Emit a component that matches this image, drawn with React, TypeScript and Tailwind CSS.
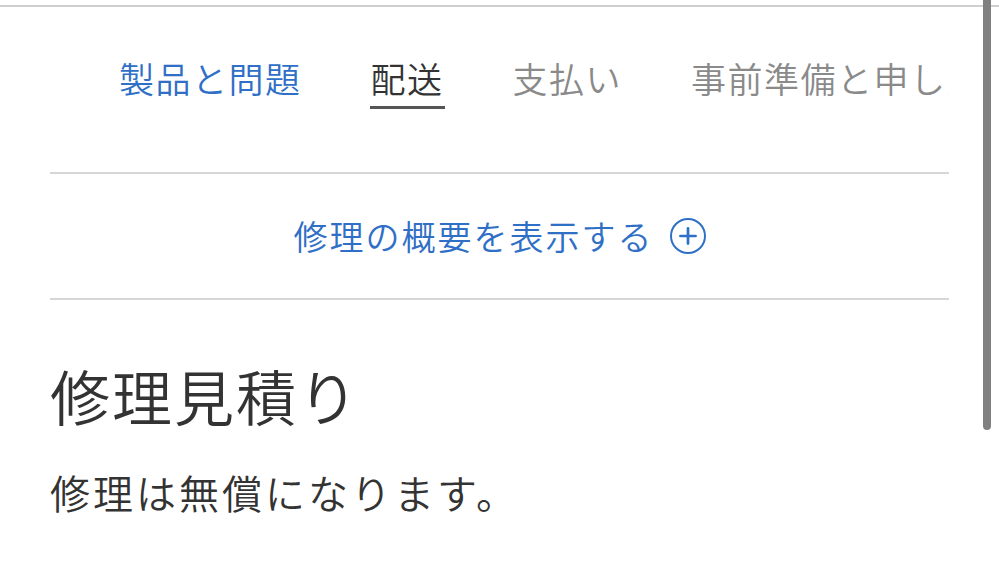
import { Plus } from "lucide-react";

const tabs = [
  { label: "製品と問題", state: "link" },
  { label: "配送", state: "active" },
  { label: "支払い", state: "idle" },
  { label: "事前準備と申し込み", state: "idle" },
];

function App() {
  return (
    <div
      className="relative w-[999px] h-[577px] overflow-hidden bg-white font-[350]"
      style={{ fontFamily: '"Noto Sans CJK JP", "Noto Sans", sans-serif' }}
    >
      <div className="mt-[5px] h-[2px] bg-[#cfcfcf]" />

      <div className="px-[50px] w-[999px]">
        <div className="w-[898px] overflow-hidden">
          <div className="flex gap-[69px] pl-[69px] pt-[45px] whitespace-nowrap">
            {tabs.map((t) => (
              <div key={t.label} className="flex flex-col items-center">
                <span
                  className={`text-[35px] tracking-[1.5px] leading-[52px] ${
                    t.state === "link"
                      ? "text-[#2f6fc6]"
                      : t.state === "active"
                        ? "text-[#333333]"
                        : "text-[#8a8a8a]"
                  }`}
                >
                  {t.label}
                </span>
                <div
                  className={`mt-[2px] h-[3px] w-[calc(100%+2px)] ${
                    t.state === "active" ? "bg-[#555555]" : "bg-transparent"
                  }`}
                />
              </div>
            ))}
          </div>
        </div>

        <div className="mt-[63px] h-[2px] bg-[#d6d6d6]" />

        <div className="h-[124px] flex items-center justify-center gap-[16px] text-[#2f6fc6]">
          <span className="text-[34px] tracking-[2px] leading-none">修理の概要を表示する</span>
          <span className="w-[36px] h-[36px] rounded-full border-[2.5px] border-[#2f6fc6] flex items-center justify-center">
            <Plus size={26} strokeWidth={2.5} />
          </span>
        </div>

        <div className="h-[2px] bg-[#d6d6d6]" />

        <h1 className="mt-[59px] text-[60px] tracking-[2px] leading-[72px] text-[#333333]">修理見積り</h1>
        <p className="mt-[36px] text-[40px] tracking-[3px] leading-[50px] text-[#333333]">修理は無償になります。</p>
      </div>

      <div className="absolute right-[8px] top-0 w-[8px] h-[430px] rounded-b-full bg-[#808080]" />
    </div>
  );
}

export default App;
